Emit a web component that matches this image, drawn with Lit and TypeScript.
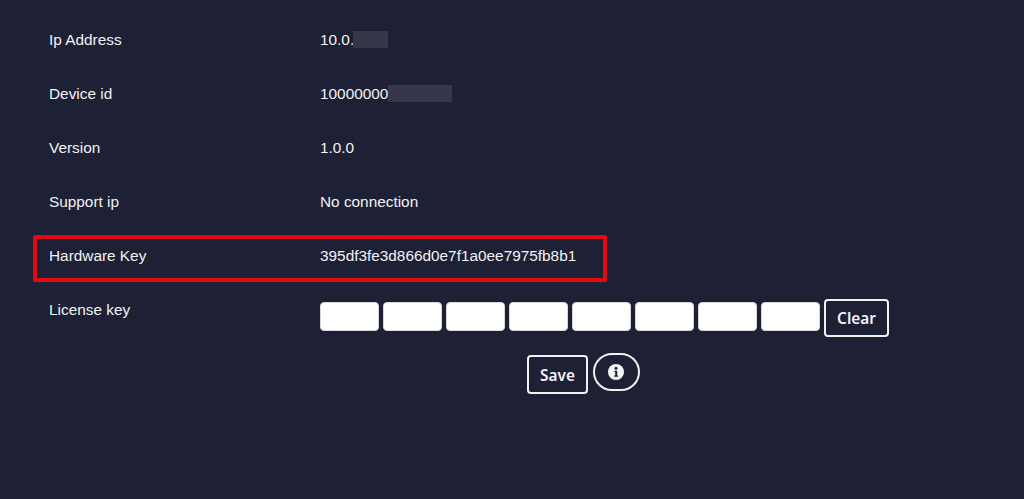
import { LitElement, html, css } from "lit";
import { customElement } from "lit/decorators.js";

@customElement("app-root")
export class AppRoot extends LitElement {
  static styles = css`
    :host {
      display: block;
      position: relative;
      height: 499px;
      overflow: hidden;
      background: #1e2035;
      color: #f2f2f2;
      font-family: "Liberation Sans", Arial, sans-serif;
      font-size: 15.36px;
      line-height: 18px;
      box-sizing: border-box;
      padding: 31px 0 0 49px;
    }
    .row {
      display: grid;
      grid-template-columns: 271px 1fr;
      height: 54px;
    }
    .value {
      display: flex;
      align-items: flex-start;
    }
    .redact {
      display: block;
      height: 17px;
      background: #36364a;
      filter: blur(0.6px);
    }
    .r1 { width: 35px; margin-left: -1px; }
    .r2 { width: 64px; }
    .keys {
      display: flex;
      align-items: flex-start;
      margin-top: -2px;
    }
    .key {
      width: 59px;
      height: 29px;
      box-sizing: border-box;
      margin: 3px 4px 0 0;
      background: #fff;
      border: 1px solid #d8d8dc;
      border-radius: 4px;
      padding: 0;
    }
    .btn {
      font-family: "Noto Sans", "Open Sans", sans-serif;
      font-weight: 600;
      font-size: 15.36px;
      line-height: 20px;
      color: #f2f2f2;
      background: transparent;
      border: 2px solid #f2f2f2;
      border-radius: 4px;
      box-sizing: border-box;
      padding: 2px 0 0;
      display: flex;
      align-items: center;
      justify-content: center;
    }
    .clear { width: 65px; height: 38px; }
    .actions {
      display: flex;
      align-items: flex-start;
      gap: 5px;
      margin: -2px 0 0 478px;
    }
    .save { width: 61px; height: 39px; margin-top: 2px; }
    .info { width: 47px; height: 38px; border-radius: 19px; padding: 0 2px 0 0; }
    .info svg { width: 16px; height: 16px; display: block; }
    .highlight {
      position: absolute;
      left: 33px;
      top: 235px;
      width: 574px;
      height: 47px;
      box-sizing: border-box;
      border: 4px solid #e00a0f;
      border-radius: 2px;
      pointer-events: none;
    }
  `;

  render() {
    return html`
      <div class="row"><span>Ip Address</span><span class="value">10.0.<i class="redact r1"></i></span></div>
      <div class="row"><span>Device id</span><span class="value">10000000<i class="redact r2"></i></span></div>
      <div class="row"><span>Version</span><span class="value">1.0.0</span></div>
      <div class="row"><span>Support ip</span><span class="value">No connection</span></div>
      <div class="row"><span>Hardware Key</span><span class="value">395df3fe3d866d0e7f1a0ee7975fb8b1</span></div>
      <div class="row">
        <span>License key</span>
        <div class="keys">
          ${Array.from({ length: 8 }, () => html`<input class="key" type="text" />`)}
          <button class="btn clear">Clear</button>
        </div>
      </div>
      <div class="actions">
        <button class="btn save">Save</button>
        <button class="btn info" aria-label="Info">
          <svg viewBox="0 0 16 16">
            <circle cx="8" cy="8" r="8" fill="#f7f7f7"></circle>
            <circle cx="8" cy="4.3" r="1.5" fill="#1e2035"></circle>
            <path d="M6.2 6.8h3v4.6h1v1.3H6.2v-1.3h1v-3.3h-1z" fill="#1e2035"></path>
          </svg>
        </button>
      </div>
      <div class="highlight"></div>
    `;
  }
}
